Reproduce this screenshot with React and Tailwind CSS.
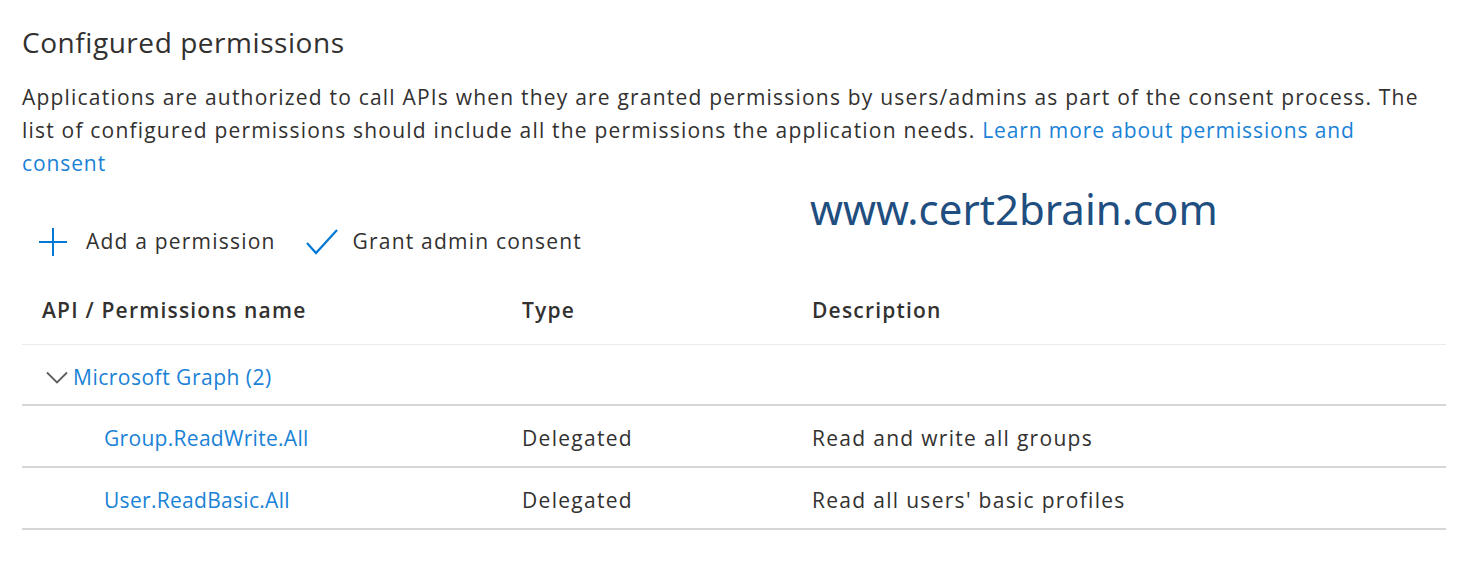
import React from "react";

const font = { fontFamily: '"Open Sans", "Noto Sans", sans-serif' };

function PlusIcon() {
  return (
    <svg width="30" height="30" viewBox="0 0 30 30" fill="none" stroke="#0078d4" strokeWidth="2">
      <path d="M15 1v28M1 15h28" />
    </svg>
  );
}

function CheckIcon() {
  return (
    <svg width="32" height="26" viewBox="0 0 32 26" fill="none" stroke="#0078d4" strokeWidth="2.2">
      <path d="M1 14l9 10L31 1" />
    </svg>
  );
}

function Chevron() {
  return (
    <svg width="22" height="14" viewBox="0 0 22 14" fill="none" stroke="#605e5c" strokeWidth="1.8">
      <path d="M1 1.5l10 10 10-10" />
    </svg>
  );
}

const rows = [
  { name: "Group.ReadWrite.All", type: "Delegated", desc: "Read and write all groups" },
  { name: "User.ReadBasic.All", type: "Delegated", desc: "Read all users' basic profiles" },
];

export default function App() {
  return (
    <div className="relative w-[1466px] h-[576px] bg-white text-[#323130] overflow-hidden" style={font}>
      <div className="pl-[22px] pr-[20px]">
        <h1 className="text-[28px] leading-[40px] pt-[22px] tracking-[0.55px]">Configured permissions</h1>

        <p className="mt-[19px] text-[21px] leading-[33px] w-[1412px] tracking-[1.2px]">
          Applications are authorized to call APIs when they are granted permissions by users/admins as part of the consent process. The list of configured permissions should include all the permissions the application needs.{" "}
          <a className="text-[#1a82d6] tracking-[0.9px]">Learn more about permissions and consent</a>
        </p>

        <div className="mt-[37px] flex items-center h-[50px] pl-[16px] text-[21px] tracking-[1.2px]">
          <div className="flex items-center gap-[18px]">
            <PlusIcon />
            <span>Add a permission</span>
          </div>
          <div className="flex items-center gap-[15px] ml-[30px]">
            <CheckIcon />
            <span>Grant admin consent</span>
          </div>
        </div>

        <div className="mt-[11px] w-[1424px] text-[21px]">
          <div className="grid grid-cols-[480px_290px_1fr] h-[67px] items-center pl-[20px] font-semibold tracking-[1.2px] border-b border-[#edebe9]">
            <span>API / Permissions name</span>
            <span>Type</span>
            <span>Description</span>
          </div>
          <div className="flex items-center h-[61px] pt-[6px] pl-[24px] border-b-2 border-[#d6d6d6] text-[#1a82d6] tracking-[0.5px]">
            <Chevron />
            <span className="ml-[5px]">Microsoft Graph (2)</span>
          </div>
          {rows.map((r) => (
            <div
              key={r.name}
              className="grid grid-cols-[480px_290px_1fr] h-[62px] pt-[6px] items-center pl-[20px] border-b-2 border-[#d6d6d6] tracking-[1.3px]"
            >
              <span className="pl-[62px] text-[#1a82d6] tracking-[0.3px]">{r.name}</span>
              <span>{r.type}</span>
              <span>{r.desc}</span>
            </div>
          ))}
        </div>
      </div>

      <div
        className="absolute left-[810px] top-[183px] text-[42px] leading-[52px] text-[#1f4e80]"
        style={{ fontFamily: '"Noto Sans", "Open Sans", sans-serif' }}
      >
        www.cert2brain.com
      </div>
    </div>
  );
}
